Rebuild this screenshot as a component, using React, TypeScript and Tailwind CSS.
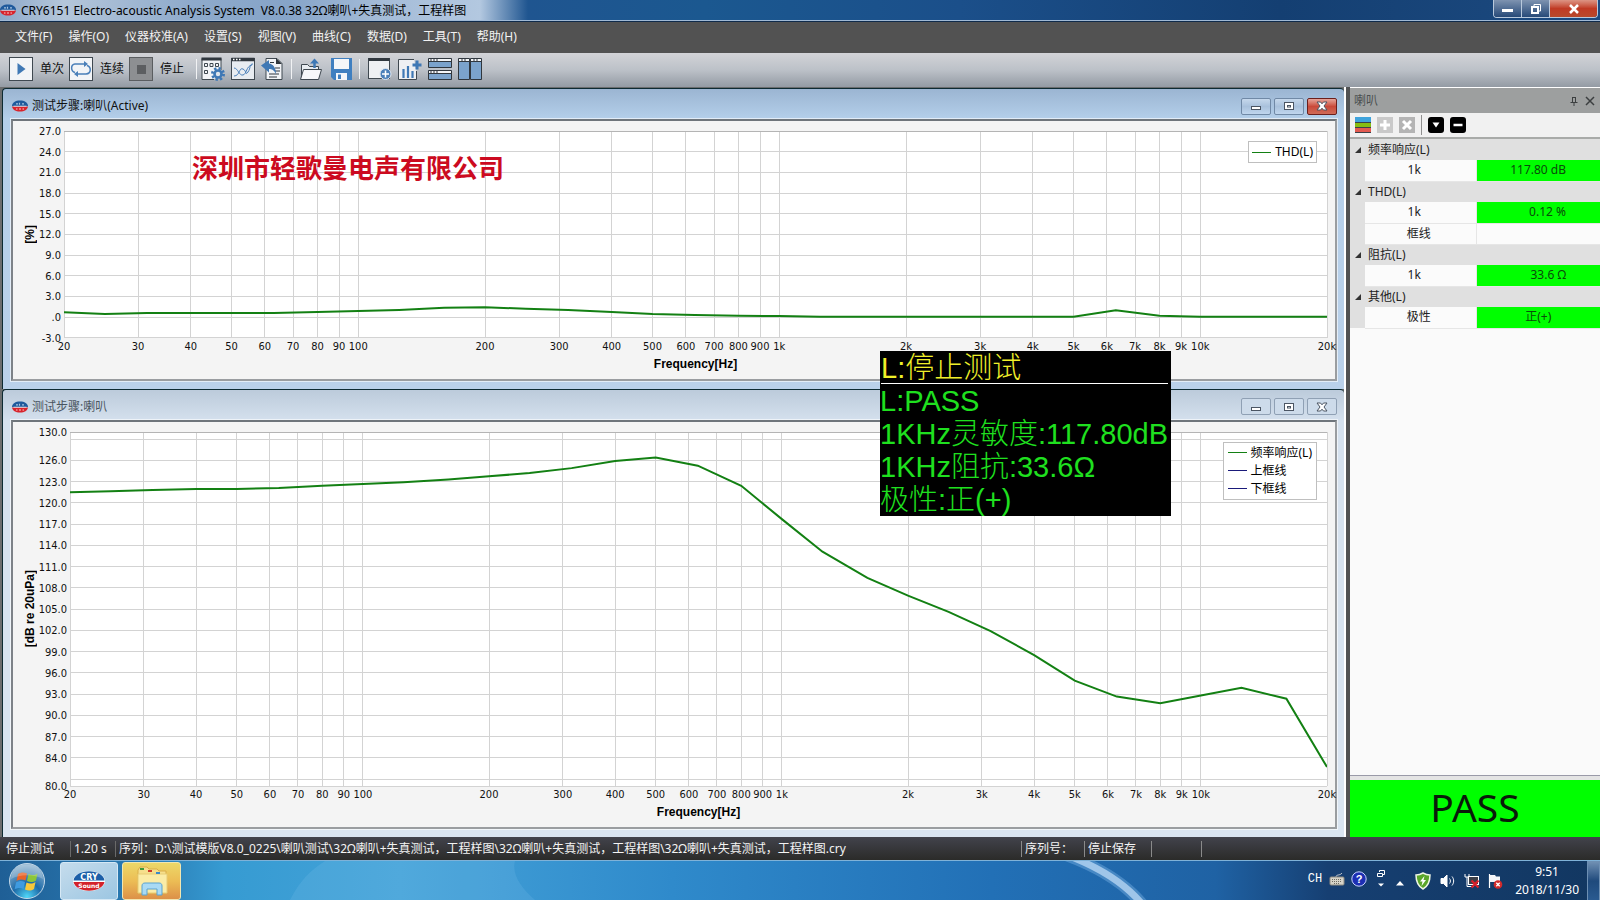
import React from 'react';

type Point = [number, number];

interface ChartProps {
  unit: string;
  min: number;
  max: number;
  ticks: number[];
  extraLines?: number[];
  data: Point[];
  plotMargin: string;
  footerPadding: string;
}

const MENU = ['文件(F)', '操作(O)', '仪器校准(A)', '设置(S)', '视图(V)', '曲线(C)', '数据(D)', '工具(T)', '帮助(H)'];

const FREQS = [20, 30, 40, 50, 60, 70, 80, 90, 100, 200, 300, 400, 500, 600, 700, 800, 900, 1000,
  2000, 3000, 4000, 5000, 6000, 7000, 8000, 9000, 10000, 20000];

const THD: Point[] = [
  [20, 0.7], [25, 0.45], [31.5, 0.6], [40, 0.6], [50, 0.6], [63, 0.6], [80, 0.75], [100, 0.9], [125, 1.05],
  [160, 1.35], [200, 1.45], [250, 1.2], [315, 1.05], [400, 0.75], [500, 0.45], [630, 0.3], [800, 0.2],
  [1000, 0.15], [1250, 0.05], [5000, 0.05], [6300, 1.0], [8000, 0.2], [10000, 0.05], [20000, 0.05],
];

const RESPONSE: Point[] = [
  [20, 121.5], [25, 121.65], [31.5, 121.8], [40, 121.95], [50, 121.95], [63, 122.1], [80, 122.4], [100, 122.65],
  [125, 122.9], [160, 123.3], [200, 123.75], [250, 124.2], [315, 124.9], [400, 125.9], [500, 126.4],
  [630, 125.25], [800, 122.4], [1000, 117.7], [1250, 113.1], [1600, 109.4], [2000, 106.9], [2500, 104.6],
  [3150, 101.9], [4000, 98.5], [5000, 94.9], [6300, 92.65], [8000, 91.7], [10000, 92.8], [12500, 93.9],
  [16000, 92.35], [20000, 82.7],
];

const xPos = (f: number) => (Math.log10(f / 20) / 3) * 100;
const freqLabel = (f: number) => (f >= 1000 ? `${f / 1000}k` : `${f}`);
const tickLabel = (v: number) => (v === 0 ? '.0' : v.toFixed(1));

const Chart: React.FC<ChartProps> = ({ unit, min, max, ticks, extraLines = [], data, plotMargin, footerPadding }) => {
  const yPos = (v: number) => ((max - v) / (max - min)) * 100;

  return (
    <div className="flex flex-1 flex-col min-h-0 pt-[10px] pr-2">
      <div className="flex flex-1 min-h-0">
        <div className="w-[34px] flex items-center justify-center">
          <span className="[writing-mode:vertical-rl] rotate-180 whitespace-nowrap font-['Liberation_Sans',sans-serif] text-[12px] leading-4 font-bold text-black">{unit}</span>
        </div>
        <div className={`flex-1 min-w-0 ${plotMargin}`}>
          <svg className="w-full h-full overflow-visible">
            <rect width="100%" height="100%" fill="#fff" />
            <g stroke="#d3d3d3" shapeRendering="crispEdges">
              {FREQS.map((f) => (
                <line key={f} x1={`${xPos(f)}%`} x2={`${xPos(f)}%`} y1="0" y2="100%" />
              ))}
              {[...ticks, ...extraLines].map((v) => (
                <line key={v} x1="0" x2="100%" y1={`${yPos(v)}%`} y2={`${yPos(v)}%`} />
              ))}
            </g>
            <line x1="0" x2="100%" y1="0" y2="0" stroke="#b4b4b4" shapeRendering="crispEdges" />
            <svg viewBox="0 0 100 100" preserveAspectRatio="none" width="100%" height="100%">
              <polyline
                points={data.map(([f, v]) => `${xPos(f)},${yPos(v)}`).join(' ')}
                fill="none"
                stroke="#138013"
                strokeWidth="2"
                vectorEffect="non-scaling-stroke"
              />
            </svg>
            <g className="font-['DejaVu_Sans_Condensed','Noto_Sans',sans-serif] text-[11px]" fill="#111">
              {ticks.map((v) => (
                <text key={v} x="-3" y={`${yPos(v)}%`} dy="4" textAnchor="end">{tickLabel(v)}</text>
              ))}
              {FREQS.map((f) => (
                <text key={f} x={`${xPos(f)}%`} y="100%" dy="12" textAnchor="middle">{freqLabel(f)}</text>
              ))}
            </g>
          </svg>
        </div>
      </div>
      <div className={`h-[41px] pt-[18px] text-center font-['Liberation_Sans',sans-serif] text-[12px] leading-4 font-bold text-black ${footerPadding}`}>
        Frequency[Hz]
      </div>
    </div>
  );
};

const Logo: React.FC<{ className: string }> = ({ className }) => (
  <svg viewBox="0 0 32 20" className={className}>
    <ellipse cx="16" cy="10" rx="16" ry="10" fill="#fff" />
    <path d="M0.5 9.6C1 4 8 0.3 16 0.3S31 4 31.5 9.6Z" fill="#1c5fa8" />
    <path d="M0.5 11C1.5 16 8 19.7 16 19.7S30.500 16 31.500 11Z" fill="#d3222a" />
    <text x="16" y="8.600" textAnchor="middle" fontSize="8" fontWeight="700" fontFamily="DejaVu Sans" fill="#fff">CRY</text>
    <text x="16" y="16.500" textAnchor="middle" fontSize="6" fontWeight="700" fontFamily="DejaVu Sans" fill="#fff">Sound</text>
  </svg>
);

const SmallLogo: React.FC = () => (
  <svg viewBox="0 0 16 12" className="w-4 h-3 shrink-0">
    <path d="M0 6C0 2.500 3.500 0.500 8 0.500S16 2.500 16 6Z" fill="#1f5a9c" />
    <path d="M0 6.500C0.500 9.500 3.500 11.500 8 11.500S15.500 9.500 16 6.500Z" fill="#d8242c" />
    <path d="M1.500 6.200h13" stroke="#e8f0f8" strokeWidth=".8" />
    <path d="M4 3.800h2M7.500 2.800v2M10 3.800h2" stroke="#a8c4e0" strokeWidth="1.200" />
    <path d="M4 9h1.500M7 9h2M10.500 9h1.500" stroke="#f6c9c9" strokeWidth="1.200" />
  </svg>
);

const CaptionButton: React.FC<{ kind: 'min' | 'max' | 'close'; active: boolean }> = ({ kind, active }) => {
  const red = kind === 'close' && active;
  const tone = red
    ? 'border-[#6b1f1c] bg-linear-to-b from-[#e5a59b] via-[#c9493a] to-[#cf6a57]'
    : active
      ? 'border-[#7089a6] bg-linear-to-b from-[#c6d8ec] via-[#a9c1dc] to-[#c0d6ee]'
      : 'border-[#8fa0b4] bg-[#cddbea]';
  return (
    <button type="button" aria-label={kind} className={`w-[30px] h-[17px] border rounded-[2px] flex items-center justify-center ${tone}`}>
      <svg viewBox="0 0 12 12" className="w-3 h-3" fill="#fff" stroke="#4b5563">
        {kind === 'min' && <rect x="1.500" y="6.500" width="9" height="3" />}
        {kind === 'max' && (
          <>
            <rect x="1.500" y="2.500" width="9" height="7" />
            <rect x="4.500" y="5.500" width="3" height="1.500" />
          </>
        )}
        {kind === 'close' && (
          <path d="M1 2h3.500L6 3.800 7.500 2H11L8 6l3 4H7.500L6 8.200 4.500 10H1l3-4Z" />
        )}
      </svg>
    </button>
  );
};

const ChartWindow: React.FC<{ title: string; active: boolean; grow: string; children: React.ReactNode }> = ({ title, active, grow, children }) => (
  <section
    className={`${grow} min-h-0 flex flex-col border-t border-l border-[#0d2b33] rounded-t-[4px] pl-2 pr-[7px] pb-2 ${
      active
        ? 'bg-linear-to-b from-[#9bb5d2] from-0% via-[#b4cfea] via-10% to-[#bad1ea]'
        : 'bg-linear-to-b from-[#bccbdb] from-0% via-[#d5e1ee] via-7% to-[#dae5f1]'
    }`}
  >
    <header className="h-[30px] shrink-0 flex items-center gap-1 pt-1 pl-px">
      <SmallLogo />
      <h2 className={`flex-1 text-[12px] leading-4 ${active ? 'text-[#111]' : 'text-[#4a5560]'}`}>{title}</h2>
      <div className="flex gap-[3px]">
        <CaptionButton kind="min" active={active} />
        <CaptionButton kind="max" active={active} />
        <CaptionButton kind="close" active={active} />
      </div>
    </header>
    <div className="relative flex-1 min-h-0 flex flex-col bg-[#f4f4f4] border-2 border-t-[#6f757b] border-l-[#7d8288] border-r-[#9a9da0] border-b-[#9a9da0] outline outline-white/60">
      {children}
    </div>
  </section>
);

const LegendRow: React.FC<{ color: string; label: string }> = ({ color, label }) => (
  <li className="flex items-center gap-1 h-[18px]">
    <span className={`w-[19px] h-px ${color}`} />
    <span className="text-[12px] leading-4 text-black whitespace-nowrap">{label}</span>
  </li>
);

const ToolButton: React.FC<{ label: string; children: React.ReactNode }> = ({ label, children }) => (
  <button type="button" aria-label={label} className="w-6 h-6 shrink-0">
    <svg viewBox="0 0 24 24" className="w-6 h-6" fill="none">{children}</svg>
  </button>
);

const Separator: React.FC = () => <span className="w-px h-5 mx-[3px] bg-[#f1f2f4]" />;

const Toolbar: React.FC = () => (
  <div className="h-[34px] shrink-0 flex items-center pl-[9px] pb-[5px] pt-[3px] text-[12px] text-[#111] bg-linear-to-b from-[#d2d3d7] via-[#bcc1c8] to-[#949ba4]">
    <ToolButton label="单次">
      <rect x=".5" y=".5" width="23" height="23" fill="#f2f4f7" stroke="#3f4850" />
      <path d="M8.500 6l8 6-8 6Z" fill="#3f78b5" />
    </ToolButton>
    <span className="w-9 pl-[7px]">单次</span>
    <ToolButton label="连续">
      <rect x=".5" y=".5" width="23" height="23" fill="#f2f4f7" stroke="#3f4850" />
      <path d="M6 15.500C1.500 14 1.500 7.500 6 7h11M18 8.500c4.500 1.500 4.500 8-1 8.500H7" stroke="#4a7fb9" strokeWidth="1.500" />
      <path d="M15 4l4 3-4 3ZM9 14l-4 3 4 3Z" fill="#4a7fb9" />
    </ToolButton>
    <span className="w-9 pl-[7px]">连续</span>
    <ToolButton label="停止">
      <rect x=".5" y=".5" width="23" height="23" fill="#8d8f92" stroke="#5a5d60" />
      <rect x="8" y="8" width="9" height="9" fill="#5c5e61" />
    </ToolButton>
    <span className="w-10 pl-[7px]">停止</span>
    <Separator />
    <div className="flex gap-[6px] pl-px">
      <ToolButton label="步骤设置">
        <path d="M20 13V1.500H1v21h12" fill="#f2f4f7" stroke="#3f4850" />
        <path d="M.5 2h20" stroke="#30373e" strokeWidth="3" />
        <path d="M3.500 6.500h3v3h-3zM9 6.500h3v3H9zM14.500 6.500h3v3h-3zM3.500 13.500h3v3h-3z" stroke="#3f4850" />
        <circle cx="17" cy="17" r="5.500" stroke="#3f78b5" strokeWidth="3" strokeDasharray="2.200 2.100" />
        <circle cx="17" cy="17" r="3.500" fill="#dfe5ec" stroke="#3f78b5" strokeWidth="2.600" />
      </ToolButton>
      <ToolButton label="曲线图">
        <rect x=".5" y="1.500" width="23" height="21" fill="#e8ecf1" stroke="#3f4850" />
        <path d="M.5 2.500h23" stroke="#30373e" strokeWidth="3.500" />
        <path d="M2 2.500h1.500M5 2.500h1.500M8 2.500h1.500" stroke="#fff" strokeWidth="1.500" />
        <path d="M3 19C9 19 8 10 12 12s2 7 5 3 1-8 5-8M3 11c4 0 5 8 9 7s3-9 9-10" stroke="#4a7fb9" />
      </ToolButton>
      <ToolButton label="报告">
        <path d="M5 1.500h11l5 5v16H5Z" fill="#f2f4f7" stroke="#3f4850" />
        <path d="M15 1v6h6Z" fill="#30373e" />
        <path d="M9 5.500h4M14 11h5M14 14h5M8 17h10M8 20h8" stroke="#30373e" />
        <path d="M0 8.500L8 3v3.500c4 .5 7 4 7 10.500-2-4-4-5-7-5v3.500Z" fill="#3f78b5" />
      </ToolButton>
    </div>
    <span className="w-[3px]" />
    <Separator />
    <div className="flex gap-[7px] pl-1">
      <ToolButton label="打开">
        <path d="M2.500 22V7.500h6l2 2h9V13" fill="#e8ecf1" stroke="#3f4850" />
        <path d="M1.500 22.500l3-10h18l-3 10Z" fill="#f7f8fa" stroke="#3f4850" />
        <path d="M15.500 11V5" stroke="#3f78b5" strokeWidth="2.500" />
        <path d="M11 6.500l4.500-5 4.500 5Z" fill="#3f78b5" />
      </ToolButton>
      <ToolButton label="保存">
        <path d="M1 1h21v22H4l-3-3Z" fill="#3f7fc0" />
        <path d="M4 2h15v10H4zM6 16h11v7H6z" fill="#f4f6f9" />
        <path d="M8 17.500h3V22H8z" fill="#3f7fc0" />
      </ToolButton>
    </div>
    <span className="w-[2px]" />
    <Separator />
    <div className="flex gap-[6px] pl-[5px]">
      <ToolButton label="新建窗口">
        <rect x=".5" y="1.500" width="21" height="20" fill="#eef0f3" stroke="#3f4850" />
        <path d="M.5 2.500h21" stroke="#30373e" strokeWidth="3" />
        <circle cx="17.500" cy="17" r="5.500" fill="#4a7fb9" stroke="#dce5ef" />
        <path d="M14 17h7M17.500 13.500v7" stroke="#fff" strokeWidth="1.500" />
      </ToolButton>
      <ToolButton label="添加曲线">
        <path d="M16 2.500H.5v20h18V14" fill="#eef0f3" stroke="#3f4850" />
        <path d="M5.500 21v-9M10 21V9M14.500 21v-7" stroke="#3f78b5" strokeWidth="2.200" />
        <path d="M19 3.500v9M14.500 8h9" stroke="#3f78b5" strokeWidth="3" />
      </ToolButton>
      <ToolButton label="水平平铺">
        <path d="M.5 1.500h23v9H.5zM.5 13.500h23v9H.5z" fill="#7ba3cc" stroke="#30373e" />
        <path d="M1 3h22M1 15h22" stroke="#f4f6f8" strokeWidth="2" />
        <path d="M.5 4.500h23M.5 16.500h23M3 2v2M6 2v2M9 2v2M3 14v2M6 14v2M9 14v2" stroke="#30373e" />
      </ToolButton>
      <ToolButton label="垂直平铺">
        <path d="M.5 1.500h11v21H.5zM12.500 1.500h11v21h-11z" fill="#7ba3cc" stroke="#30373e" />
        <path d="M1 3h10M13 3h10" stroke="#f4f6f8" strokeWidth="2" />
        <path d="M.5 4.500h23M4 2v2M7 2v2M16 2v2M19 2v2" stroke="#30373e" />
      </ToolButton>
    </div>
  </div>
);

interface Result {
  name: string;
  value: string;
  nameStyle: string;
  valueStyle: string;
}

const NUMERIC = { nameStyle: 'pr-3', valueStyle: 'text-right pr-[34px] bg-[#00ff00]' };

const GROUPS: { title: string; rows: Result[] }[] = [
  { title: '频率响应(L)', rows: [{ name: '1k', value: '117.80 dB', ...NUMERIC }] },
  {
    title: 'THD(L)',
    rows: [
      { name: '1k', value: '0.12 %', ...NUMERIC },
      { name: '框线', value: '', nameStyle: 'pr-[3px]', valueStyle: 'bg-[#fbfbfb]' },
    ],
  },
  { title: '阻抗(L)', rows: [{ name: '1k', value: '33.6 Ω', ...NUMERIC }] },
  { title: '其他(L)', rows: [{ name: '极性', value: '正(+)', nameStyle: 'pr-[3px]', valueStyle: 'text-center bg-[#00ff00]' }] },
];

const ResultPanel: React.FC = () => (
  <aside className="w-[250px] shrink-0 flex flex-col border-t border-white bg-[#fafafa]">
    <header className="h-[25px] shrink-0 flex items-center gap-1 pl-1 pr-1 bg-[#9d9f9f] text-[#4b4f50]">
      <h2 className="flex-1 text-[12px] leading-4">喇叭</h2>
      <button type="button" aria-label="固定" className="w-3 h-3">
        <svg viewBox="0 0 12 12" className="w-3 h-3" fill="none" stroke="#3c3f40">
          <path d="M4.500 2v5.500M4 2.500h4M7.500 2v5.500M2.500 7.500h7M6 8v3" />
        </svg>
      </button>
      <button type="button" aria-label="关闭" className="w-3 h-3">
        <svg viewBox="0 0 12 12" className="w-3 h-3" stroke="#3c3f40" strokeWidth="1.500">
          <path d="M2 2l8 8M10 2l-8 8" />
        </svg>
      </button>
    </header>
    <div className="h-[26px] shrink-0 flex items-center gap-[6px] pl-[5px] bg-[#f1f1f1] border-b-2 border-[#a9aba9]">
      <button type="button" aria-label="颜色" className="w-4 h-4">
        <svg viewBox="0 0 16 16" className="w-4 h-4">
          <path d="M0 0h16v16H0z" fill="#3b4148" />
          <path d="M0 0h16v5H0z" fill="#3fa3dc" />
          <path d="M0 6h16v4H0z" fill="#86bd13" />
          <path d="M0 11h16v4H0z" fill="#e25a50" />
        </svg>
      </button>
      <button type="button" aria-label="添加" className="w-4 h-4">
        <svg viewBox="0 0 16 16" className="w-4 h-4">
          <path d="M0 0h16v16H0z" fill="#c9c9c9" />
          <path d="M8 3v10M3 8h10" stroke="#fff" strokeWidth="3" />
        </svg>
      </button>
      <button type="button" aria-label="删除" className="w-4 h-4">
        <svg viewBox="0 0 16 16" className="w-4 h-4">
          <path d="M0 0h16v16H0z" fill="#b4b4b4" />
          <path d="M4 4l8 8M12 4l-8 8" stroke="#fff" strokeWidth="3" />
        </svg>
      </button>
      <span className="w-px h-5 bg-[#8f8f8f]" />
      <button type="button" aria-label="展开" className="w-4 h-4">
        <svg viewBox="0 0 16 16" className="w-4 h-4">
          <rect width="16" height="16" rx="3" />
          <path d="M4.500 5.500h7L8 10.500Z" fill="#fff" />
        </svg>
      </button>
      <button type="button" aria-label="折叠" className="w-4 h-4">
        <svg viewBox="0 0 16 16" className="w-4 h-4">
          <rect width="16" height="16" rx="3" />
          <path d="M3.500 8h9" stroke="#fff" strokeWidth="2.500" />
        </svg>
      </button>
    </div>
    <table className="w-full table-fixed border-collapse text-[13px] leading-4">
      <colgroup>
        <col className="w-[15px]" />
        <col className="w-[111px]" />
        <col />
      </colgroup>
      {GROUPS.map((group) => (
        <tbody key={group.title}>
          <tr className="h-[21px] bg-[#e0e0e0]">
            <td className="p-0">
              <svg viewBox="0 0 8 8" className="w-2 h-2 ml-1">
                <path d="M7 1v6H1Z" fill="#333" />
              </svg>
            </td>
            <th colSpan={2} scope="rowgroup" className="p-0 pl-[3px] text-left text-[12px] font-normal text-[#222]">{group.title}</th>
          </tr>
          {group.rows.map((row) => (
            <tr key={row.name} className="h-[21px]">
              <td className="p-0 bg-[#e0e0e0]" />
              <th scope="row" className={`p-0 font-normal text-[12px] text-[#222] bg-[#fbfbfb] border-b border-[#e6e6e6] ${row.nameStyle}`}>{row.name}</th>
              <td className={`p-0 border-b border-l border-[#e6e6e6] text-[12px] text-[#0b4a0b] ${row.valueStyle}`}>{row.value}</td>
            </tr>
          ))}
        </tbody>
      ))}
    </table>
    <div className="flex-1 border-b border-[#9a9aa8]" />
    <div className="h-1 bg-[#e4e4e4]" />
    <output className="h-[57px] shrink-0 flex items-center justify-center pb-1 bg-[#00ff00] text-[39px] leading-[40px] text-[#0a1a0a]">PASS</output>
  </aside>
);

const Tray: React.FC = () => (
  <div className="flex items-center text-white">
    <span className="font-['Liberation_Mono',monospace] text-[12px] leading-4 mb-1">CH</span>
    <svg viewBox="0 0 16 16" className="w-4 h-4 ml-[7px] mb-1" fill="none">
      <path d="M7 6c0-3 4-1 6-4" stroke="#c9cdd2" />
      <rect x="1" y="6" width="14" height="8" rx="1" fill="#d6d3c8" stroke="#8f8c82" />
      <path d="M3 8.500h10M3 10.500h10M5 12.500h6" stroke="#6f6c62" strokeDasharray="1 1" />
    </svg>
    <svg viewBox="0 0 16 16" className="w-4 h-4 ml-[6px] mb-1">
      <circle cx="8" cy="8" r="7.200" fill="#1c2fb4" stroke="#c8d2ff" />
      <text x="8" y="12" textAnchor="middle" fontSize="11" fontWeight="700" fontFamily="Liberation Sans" fill="#fff">?</text>
    </svg>
    <svg viewBox="0 0 10 20" className="w-[10px] h-5 ml-[9px] mb-1" fill="none" stroke="#fff">
      <path d="M3.500 3V1.500h5v4H7M1.500 4.500h5v3h-5z" />
      <path d="M2 14.500h6L5 17.500Z" fill="#fff" stroke="none" />
    </svg>
    <button type="button" aria-label="显示隐藏的图标" className="w-[10px] ml-[9px] mt-1">
      <svg viewBox="0 0 10 6" className="w-[10px] h-[6px]"><path d="M5 1l4 4.500H1Z" fill="#fff" /></svg>
    </button>
    <svg viewBox="0 0 16 18" className="w-4 h-[18px] ml-[10px] mt-px">
      <path d="M8 1c2.500 1.500 4.500 2 7 2 0 6.500-1.500 11-7 14C2.500 14 1 9.500 1 3c2.500 0 4.500-.5 7-2Z" fill="#5aa62a" stroke="#eef5e6" strokeWidth="1.500" />
      <path d="M9.500 4L5 9.500h2.500L6.500 14 11 8H8.500Z" fill="#fff" />
    </svg>
    <svg viewBox="0 0 16 16" className="w-4 h-4 ml-[9px] mt-px" fill="none" stroke="#fff">
      <path d="M1 5.500h2.500L7 2v12l-3.500-3.500H1Z" fill="#fff" />
      <path d="M9.500 5.500c1.200 1.500 1.200 3.500 0 5M12 3.500c2.200 2.700 2.200 6.300 0 9" />
    </svg>
    <svg viewBox="0 0 16 16" className="w-4 h-4 ml-2 mt-px" fill="none" stroke="#fff">
      <rect x="4.500" y="3.500" width="10" height="8" fill="#3b3f48" />
      <path d="M1 1v3h4V1M3 4v9.500h7" />
      <path d="M7.500 7.500l7 7M14.500 7.500l-7 7" stroke="#d8202a" strokeWidth="2.200" />
    </svg>
    <svg viewBox="0 0 16 16" className="w-4 h-4 ml-[7px] mt-px">
      <path d="M2.500 1v14" stroke="#fff" strokeWidth="1.200" />
      <path d="M3 2h5l1 1.500h4V9H3Z" fill="#f4f6fa" />
      <circle cx="11" cy="11.500" r="4.300" fill="#d32a2a" />
      <path d="M9.300 9.800l3.400 3.400M12.700 9.800l-3.400 3.400" stroke="#fff" strokeWidth="1.300" />
    </svg>
    <time className="ml-3 text-center text-[12px] leading-[18px]">
      9:51<br />2018/11/30
    </time>
    <button type="button" aria-label="显示桌面" className="w-[13px] h-10 ml-2 border border-[#6d8fb3] bg-linear-to-b from-[#6f8fb2] via-[#1f4a7c] to-[#2a5a90]" />
  </div>
);

const Taskbar: React.FC = () => (
  <footer className="h-10 shrink-0 relative flex items-center justify-between overflow-hidden border-t border-[#7fb2d8] bg-[linear-gradient(to_right,#1f5f96_0%,#2c80b8_10%,#369bd2_14%,#44a2d8_25%,#2f8acb_42%,#2270b6_62%,#1f62a4_76%,#163f72_83%,#123761_100%)]">
    <svg className="absolute inset-0 w-full h-full" viewBox="0 0 1600 40" preserveAspectRatio="none" fill="none">
      <path d="M290 40C300 20 310 10 325 0h190c-4 14 8 30 20 40Z" fill="#8fd0f2" opacity=".16" />
      <path d="M1066 -6C1098 6 1124 22 1142 44" stroke="#8fc4f2" strokeWidth="12" opacity=".35" />
      <path d="M1067 -6C1098 6 1124 22 1142 44" stroke="#c4e0fa" strokeWidth="7" opacity=".7" />
    </svg>
    <div className="relative flex items-center">
      <button type="button" aria-label="开始" className="w-[38px] h-[38px] ml-2">
        <svg viewBox="0 0 38 38" className="w-[38px] h-[38px]">
          <defs>
            <radialGradient id="orb" cx=".5" cy=".95" r=".9">
              <stop offset="0" stopColor="#4fd8f8" />
              <stop offset=".45" stopColor="#1d6aa8" />
              <stop offset="1" stopColor="#8fb4d0" />
            </radialGradient>
          </defs>
          <circle cx="19" cy="19" r="17.500" fill="url(#orb)" stroke="#c4d8e8" />
          <path d="M10 12c3-2 6-2 9-.5l-1.500 7c-3-1.500-6-1.500-9 .5Z" fill="#e8642a" />
          <path d="M20.500 12c3 1.500 6 1.500 9-.5L28 18.500c-3 2-6 2-9 .5Z" fill="#8cc63a" />
          <path d="M8 20.500c3-2 6-2 9-.5l-1.500 7c-3-1.500-6-1.500-9 .5Z" fill="#3f9be0" />
          <path d="M18.500 20.500c3 1.500 6 1.500 9-.5L26 27c-3 2-6 2-9 .5Z" fill="#f8c83a" />
          <path d="M3 17C4 7 11 2.500 19 2.500S34 7 35 17c-9-5-23-5-32 0Z" fill="#fff" opacity=".22" />
        </svg>
      </button>
      <button type="button" aria-label="CRY Sound" className="w-[58px] h-[38px] ml-[14px] flex items-center justify-center rounded-[3px] border border-[#d5e8f5] bg-linear-to-br from-[#c5dcec] to-[#9cc6e2]">
        <Logo className="w-8 h-5" />
      </button>
      <button type="button" aria-label="资源管理器" className="w-[59px] h-[38px] ml-1 flex items-center justify-center rounded-[3px] border border-[#f2e6b0] bg-linear-to-b from-[#ecd868] via-[#ecbd55] to-[#dc9048]">
        <svg viewBox="0 0 32 30" className="w-8 h-[30px]">
          <path d="M2 4l2-3h7l2 2h8l2 2h7v22H2Z" fill="#f6df8c" stroke="#d9ae48" />
          <path d="M2 8h29v19H2Z" fill="#fbeca6" stroke="#e8cc74" />
          <path d="M4 3h4" stroke="#3f9a3a" strokeWidth="2" />
          <path d="M12 5h4" stroke="#cf3a2a" strokeWidth="2" />
          <path d="M20 7h4" stroke="#3a8ac8" strokeWidth="2" />
          <path d="M6 29V20c0-2 1-3 3-3h14c2 0 3 1 3 3v9h-5v-6H11v6Z" fill="#a9daf4" stroke="#5ba3d0" />
        </svg>
      </button>
    </div>
    <div className="relative"><Tray /></div>
  </footer>
);

export default function App() {
  return (
    <div className="min-h-screen flex flex-col bg-[#515253] font-['Noto_Sans','Noto_Sans_CJK_SC',sans-serif] select-none">
      <header className="h-[22px] shrink-0 flex items-start justify-between border-b border-[#0f2a4a] bg-[linear-gradient(to_right,#8ea9c9_0%,#b4c6da_4%,#8eaacb_12%,#86a4c8_18%,#a5bcd8_24%,#b3c8e0_30%,#1f5590_33%,#1b5890_44%,#1b4f8a_60%,#143f72_80%,#1c4a80_100%)]">
        <div className="flex flex-1 h-[21px] items-center gap-[5px] border-b border-[#9fb8d4]">
          <SmallLogo />
          <h1 className="pt-px text-[12px] leading-4 text-black whitespace-pre">{'CRY6151 Electro-acoustic Analysis System  V8.0.38 32Ω喇叭+失真测试，工程样图'}</h1>
        </div>
        <div className="flex-1 h-[21px] flex justify-end pr-[2px] border-b border-[#9fb8d4]">
          <div className="flex h-[18px] border border-t-0 border-[#b9c9dc] rounded-b-[4px] overflow-hidden">
            <button type="button" aria-label="最小化" className="w-7 border-r border-[#b9c9dc] flex items-end justify-center pb-[5px] bg-linear-to-b from-[#7e93b0] to-[#274a78]">
              <span className="w-[11px] h-[3px] bg-white" />
            </button>
            <button type="button" aria-label="还原" className="w-7 border-r border-[#b9c9dc] flex items-center justify-center bg-linear-to-b from-[#7e93b0] to-[#274a78]">
              <svg viewBox="0 0 12 12" className="w-3 h-3" fill="none" stroke="#fff">
                <path d="M4 3V1.500h6.500V8H9" />
                <rect x="2" y="4" width="6" height="6" strokeWidth="2" />
              </svg>
            </button>
            <button type="button" aria-label="关闭" className="w-[47px] flex items-center justify-center bg-linear-to-b from-[#dc9484] via-[#c03a24] to-[#b8492c]">
              <svg viewBox="0 0 12 12" className="w-3 h-3" stroke="#fff" strokeWidth="2.500">
                <path d="M2 2l8 8M10 2l-8 8" />
              </svg>
            </button>
          </div>
        </div>
      </header>

      <nav className="h-[31px] shrink-0 flex items-center gap-4 pl-[15px] pb-px bg-[#525252] text-[12px] leading-4 text-[#f2f2f2]">
        {MENU.map((item) => (
          <button key={item} type="button">{item}</button>
        ))}
      </nav>

      <Toolbar />

      <main className="flex-1 min-h-0 flex">
        <div className="relative flex-1 min-w-0 flex flex-col pl-[2px] pt-px mr-1 border-r-2 border-white bg-[#6b6d6e]">
          <ChartWindow title="测试步骤:喇叭(Active)" active grow="flex-[299]">
            <Chart
              unit="[%]"
              min={-3}
              max={27}
              ticks={[27, 24, 21, 18, 15, 12, 9, 6, 3, 0, -3]}
              data={THD}
              plotMargin="ml-[17px]"
              footerPadding="pl-[51px]"
            />
            <p className="absolute left-[179px] top-[29px] text-[26px] leading-[36px] font-bold text-[#cc0a20] whitespace-nowrap">深圳市轻歌曼电声有限公司</p>
            <ul className="absolute right-[18px] top-[20px] px-[3px] py-px border border-[#bfbfbf] bg-white">
              <LegendRow color="bg-[#138013]" label="THD(L)" />
            </ul>
          </ChartWindow>

          <ChartWindow title="测试步骤:喇叭" active={false} grow="flex-[450]">
            <Chart
              unit="[dB re 20uPa]"
              min={80}
              max={130}
              ticks={[130, 126, 123, 120, 117, 114, 111, 108, 105, 102, 99, 96, 93, 90, 87, 84, 80]}
              extraLines={[129, 81]}
              data={RESPONSE}
              plotMargin="ml-[23px]"
              footerPadding="pl-[57px]"
            />
            <ul className="absolute right-[18px] top-[20px] px-1 py-px border border-[#bfbfbf] bg-white">
              <LegendRow color="bg-[#138013]" label="频率响应(L)" />
              <LegendRow color="bg-[#1a1a7a]" label="上框线" />
              <LegendRow color="bg-[#1a1a7a]" label="下框线" />
            </ul>
          </ChartWindow>

          <div className="absolute left-[880px] top-[264px] pr-[3px] bg-black font-['Liberation_Sans','Noto_Sans_CJK_SC',sans-serif] font-light text-[29px] leading-[35px] text-[#1fe01f] whitespace-nowrap">
            <p className="h-[33px] ml-px border-b border-white text-[#f0f02a]">L:停止测试</p>
            <p className="h-[33px]">L:PASS</p>
            <p className="h-[33px]">1KHz灵敏度:117.80dB</p>
            <p className="h-[33px]">1KHz阻抗:33.6Ω</p>
            <p className="h-[33px]">极性:正(+)</p>
          </div>
        </div>
        <ResultPanel />
      </main>

      <div className="h-[23px] shrink-0 flex items-center pt-px text-[12px] leading-4 text-[#f4f4f4] bg-linear-to-b from-[#42434c] to-[#2b2b29]">
        <span className="w-[70px] pl-[6px]">停止测试</span>
        <span className="w-[45px] pl-[3px] border-l border-[#6a6a6a]">1.20 s</span>
        <span className="flex-1 min-w-0 truncate pl-[3px] border-l border-[#6a6a6a]">
          序列：D:\测试模版V8.0_0225\喇叭测试\32Ω喇叭+失真测试，工程样图\32Ω喇叭+失真测试，工程样图\32Ω喇叭+失真测试，工程样图.cry
        </span>
        <span className="w-[63px] pl-[3px] border-l border-[#8a8a8a]">序列号：</span>
        <span className="w-[67px] pl-[3px] border-l border-[#8a8a8a]">停止保存</span>
        <span className="w-[50px] h-4 border-l border-[#8a8a8a]" />
        <span className="w-[399px] h-4 border-l border-[#8a8a8a]" />
      </div>

      <Taskbar />
    </div>
  );
}
